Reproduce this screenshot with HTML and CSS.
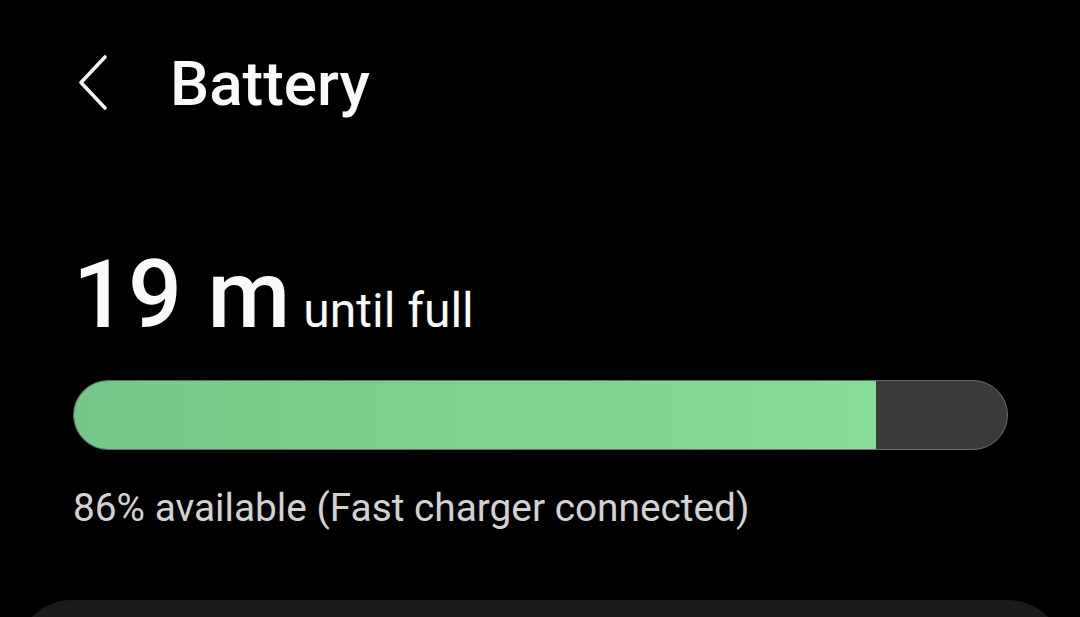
FILE: index.html
```html
<!DOCTYPE html>
<html>
<head>
<meta charset="utf-8">
<link rel="stylesheet" href="styles.css">
</head>
<body>
<div class="screen">
  <header class="appbar">
    <svg class="back" width="40" height="64" viewBox="0 0 40 64"><path d="M32 4 L8 29.5 L32 55" fill="none" stroke="#f2f2f2" stroke-width="3.6" stroke-linecap="round" stroke-linejoin="round"/></svg>
    <h1 class="title">Battery</h1>
  </header>
  <section class="status">
    <div class="time"><span class="big">19 m</span><span class="small">until full</span></div>
    <div class="bar"><div class="fill" style="width:86%"></div></div>
    <div class="avail">86% available (Fast charger connected)</div>
  </section>
  <div class="card"></div>
</div>
</body>
</html>
```
FILE: styles.css
```css
html, body { margin: 0; padding: 0; background: #000; }
.screen { width: 1080px; height: 617px; overflow: hidden; background: #000; font-family: Roboto, "Noto Sans", sans-serif; color: #fafafa; display: flex; flex-direction: column; }
.appbar { display: flex; align-items: center; height: 64px; margin-top: 52px; padding-left: 73px; }
.back { display: block; margin-top: 2px; }
.title { margin: 0 0 0 57px; font-size: 62px; font-weight: 500; letter-spacing: 0; line-height: 64px; color: #fafafa; }
.status { padding: 0 73px; margin-top: 137px; }
.time { display: flex; align-items: baseline; height: 84px; line-height: 84px; }
.big { font-size: 95px; font-weight: 500; letter-spacing: 1px; }
.small { font-size: 48px; font-weight: 400; margin-left: 12px; }
.bar { margin-top: 43px; width: 933px; height: 68px; border: 1.5px solid #6e6e6e; border-radius: 36px; background: #3a3a3a; overflow: hidden; }
.fill { height: 100%; background: linear-gradient(90deg, #74c787, #86dd95); }
.avail { margin-top: 36px; font-size: 38.8px; color: #d2d2d2; line-height: 44px; }
.card { margin: 70px 16px 0 16px; height: 120px; background: #1b1b1b; border-radius: 56px; flex-shrink: 0; }
```
